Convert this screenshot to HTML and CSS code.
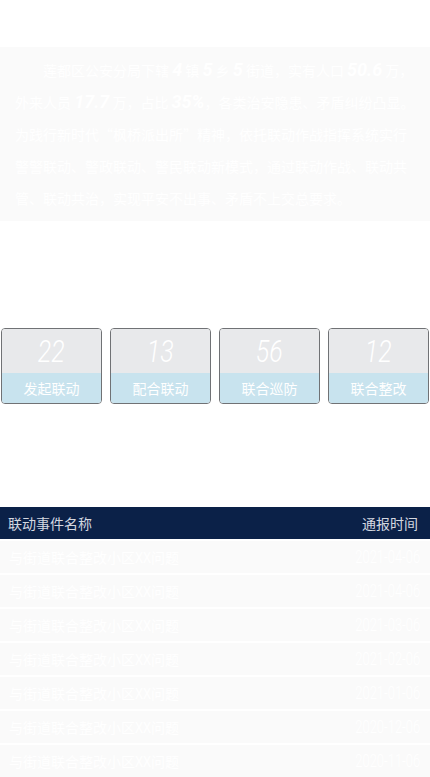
FILE: index.html
```html
<!DOCTYPE html>
<html lang="zh">
<head>
<meta charset="utf-8">
<title>联动作战</title>
<link rel="stylesheet" href="styles.css">
</head>
<body>
<div class="topbar"></div>
<section class="intro">
<p>莲都区公安分局下辖 <b>4</b> 镇 <b>5</b> 乡 <b>5</b> 街道，实有人口 <b>50.6</b> 万，外来人员 <b>17.7</b> 万，占比 <b>35%</b>，各类治安隐患、矛盾纠纷凸显。为践行新时代“枫桥派出所”精神，依托联动作战指挥系统实行警警联动、警政联动、警民联动新模式，通过联动作战、联动共管、联动共治，实现平安不出事、矛盾不上交总要求。</p>
</section>
<section class="cards">
  <div class="card"><div class="num"><span>22</span></div><div class="label">发起联动</div></div>
  <div class="card"><div class="num"><span>13</span></div><div class="label">配合联动</div></div>
  <div class="card"><div class="num"><span>56</span></div><div class="label">联合巡防</div></div>
  <div class="card"><div class="num"><span>12</span></div><div class="label">联合整改</div></div>
</section>
<section class="table">
  <div class="thead"><span>联动事件名称</span><span>通报时间</span></div>
  <div class="row"><span class="name">与街道联合整改小区XX问题</span><span class="date">2021-04-06</span></div>
  <div class="row"><span class="name">与街道联合整改小区XX问题</span><span class="date">2021-04-06</span></div>
  <div class="row"><span class="name">与街道联合整改小区XX问题</span><span class="date">2021-03-06</span></div>
  <div class="row"><span class="name">与街道联合整改小区XX问题</span><span class="date">2021-02-06</span></div>
  <div class="row"><span class="name">与街道联合整改小区XX问题</span><span class="date">2021-01-06</span></div>
  <div class="row"><span class="name">与街道联合整改小区XX问题</span><span class="date">2020-12-06</span></div>
  <div class="row"><span class="name">与街道联合整改小区XX问题</span><span class="date">2020-11-06</span></div>
</section>
</body>
</html>
```
FILE: styles.css
```css
html, body {
  margin: 0;
  padding: 0;
  background: #fff;
  font-family: "Noto Sans CJK SC", "Noto Sans", sans-serif;
}
.topbar {
  height: 47px;
}
.intro {
  background: #fafafa;
  padding: 7px 15px;
  color: #fff;
  font-size: 14px;
  line-height: 32px;
}
.intro p {
  margin: 0;
  text-indent: 2em;
}
.intro b {
  font-family: "Roboto", sans-serif;
  font-style: italic;
  font-weight: 700;
  font-size: 18px;
  line-height: 1;
}
.cards {
  margin-top: 107px;
  display: flex;
  gap: 8px;
  padding: 0 1px;
}
.card {
  flex: 1;
  border: 1px solid #707275;
  border-radius: 4px;
  overflow: hidden;
  display: flex;
  flex-direction: column;
}
.num {
  height: 44px;
  background: #e8e9eb;
  display: flex;
  align-items: center;
  justify-content: center;
  color: #fff;
}
.num span {
  display: inline-block;
  font-family: "Roboto", sans-serif;
  font-weight: 300;
  font-style: italic;
  font-size: 32px;
  line-height: 1;
  transform: scaleX(0.78);
}
.label {
  height: 30px;
  background: #c8e3ee;
  color: #fff;
  font-size: 14px;
  display: flex;
  align-items: center;
  justify-content: center;
}
.table {
  margin-top: 103px;
}
.thead {
  height: 32px;
  background: #0b2148;
  color: #d4d8e0;
  font-size: 14px;
  display: flex;
  align-items: center;
  justify-content: space-between;
  padding: 0 12px 0 8px;
}
.row {
  margin-top: 2px;
  height: 32px;
  background: #fafafa;
  color: #fff;
  display: flex;
  align-items: center;
  justify-content: space-between;
  padding: 0 10px 0 9px;
}
.name {
  font-size: 14px;
}
.date {
  display: inline-block;
  font-family: "Roboto", sans-serif;
  font-weight: 300;
  font-size: 18px;
  line-height: 1;
  transform: scaleX(0.72);
  transform-origin: right center;
}
```
